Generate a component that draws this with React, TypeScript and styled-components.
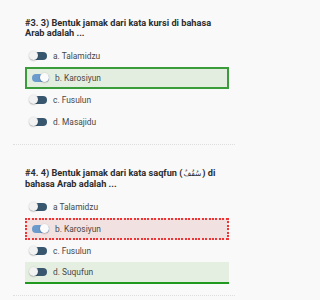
import React from "react";
import styled, { createGlobalStyle, css } from "styled-components";

const Global = createGlobalStyle`
  html, body { margin: 0; padding: 0; background: #f9f9f9; }
  body { font-family: Roboto, "Noto Sans", Arial, sans-serif; -webkit-font-smoothing: antialiased; }
`;

const Page = styled.div`
  width: 235px;
  height: 300px;
  overflow: hidden;
  background: #f9f9f9;
`;

const Section = styled.section<{ $first?: boolean }>`
  margin-left: 13px;
  padding: ${(p) => (p.$first ? "18px" : "23px")} 6px 11px 12px;
  border-bottom: 1px dotted #dedede;
`;

const Title = styled.h3`
  margin: 0 0 6px 0;
  font-size: 9.2px;
  line-height: 10.4px;
  font-weight: 700;
  color: #2d2d2d;
`;

const Line = styled.span`
  display: block;
  white-space: nowrap;
`;

const Arabic = styled.span`
  font-family: "DejaVu Sans", "Noto Sans", sans-serif;
  font-size: 7.5px;
  font-weight: 400;
  unicode-bidi: isolate;
  padding: 0 1px;
`;

const Options = styled.div`
  display: flex;
  flex-direction: column;
`;

type Mark = "none" | "correct" | "wrong" | "answer";

const dash = "#ee3434";

const Row = styled.div<{ $mark: Mark }>`
  box-sizing: border-box;
  height: 22px;
  display: flex;
  align-items: center;
  gap: 6px;
  padding-left: 4px;
  font-size: 8.4px;
  color: #474747;
  ${(p) =>
    p.$mark === "correct" &&
    css`
      background: #e3eee0;
      border: 2px solid #3a9c3a;
    `}
  ${(p) =>
    p.$mark === "wrong" &&
    css`
      border: 2px solid transparent;
      background:
        repeating-linear-gradient(90deg, ${dash} 0 2px, transparent 2px 3.4px) top left / 100% 2px no-repeat border-box,
        repeating-linear-gradient(90deg, ${dash} 0 2px, transparent 2px 3.4px) bottom left / 100% 2px no-repeat border-box,
        repeating-linear-gradient(180deg, ${dash} 0 2px, transparent 2px 3.4px) top left / 2px 100% no-repeat border-box,
        repeating-linear-gradient(180deg, ${dash} 0 2px, transparent 2px 3.4px) top right / 2px 100% no-repeat border-box,
        #f1e1e1;
    `}
  ${(p) =>
    p.$mark === "answer" &&
    css`
      background: #e5efe1;
      border-bottom: 2px solid #1f9a1f;
    `}
`;

const Toggle = styled.span<{ $on?: boolean }>`
  position: relative;
  flex: none;
  width: 18px;
  height: 9px;
  display: inline-block;
  &::before {
    content: "";
    position: absolute;
    left: 1px;
    right: 0;
    top: 0.5px;
    height: 8px;
    border-radius: 4px;
    background: ${(p) => (p.$on ? "#6a9bcc" : "#38566e")};
  }
  &::after {
    content: "";
    position: absolute;
    top: 0;
    left: ${(p) => (p.$on ? "9px" : "0")};
    width: 9px;
    height: 9px;
    border-radius: 50%;
    background: ${(p) => (p.$on ? "#fbfbfb" : "#f2f2f2")};
    box-shadow: 0 0.5px 1.5px rgba(0, 0, 0, 0.35);
  }
`;

type Q = {
  title: React.ReactNode;
  options: { label: string; on?: boolean; mark: Mark }[];
};

const questions: Q[] = [
  {
    title: (
      <>
        <Line>#3. 3) Bentuk jamak dari kata kursi di bahasa</Line>
        <Line>Arab adalah ...</Line>
      </>
    ),
    options: [
      { label: "a. Talamidzu", mark: "none" },
      { label: "b. Karosiyun", on: true, mark: "correct" },
      { label: "c. Fusulun", mark: "none" },
      { label: "d. Masajidu", mark: "none" },
    ],
  },
  {
    title: (
      <>
        <Line>
          #4. 4) Bentuk jamak dari kata saqfun (<Arabic lang="ar">سُقُفٌ</Arabic>) di
        </Line>
        <Line>bahasa Arab adalah ...</Line>
      </>
    ),
    options: [
      { label: "a Talamidzu", mark: "none" },
      { label: "b. Karosiyun", on: true, mark: "wrong" },
      { label: "c. Fusulun", mark: "none" },
      { label: "d. Suqufun", mark: "answer" },
    ],
  },
];

export default function App() {
  return (
    <Page>
      <Global />
      {questions.map((q, i) => (
        <Section key={i} $first={i === 0}>
          <Title>{q.title}</Title>
          <Options>
            {q.options.map((o) => (
              <Row key={o.label} $mark={o.mark}>
                <Toggle $on={o.on} />
                <span>{o.label}</span>
              </Row>
            ))}
          </Options>
        </Section>
      ))}
    </Page>
  );
}
